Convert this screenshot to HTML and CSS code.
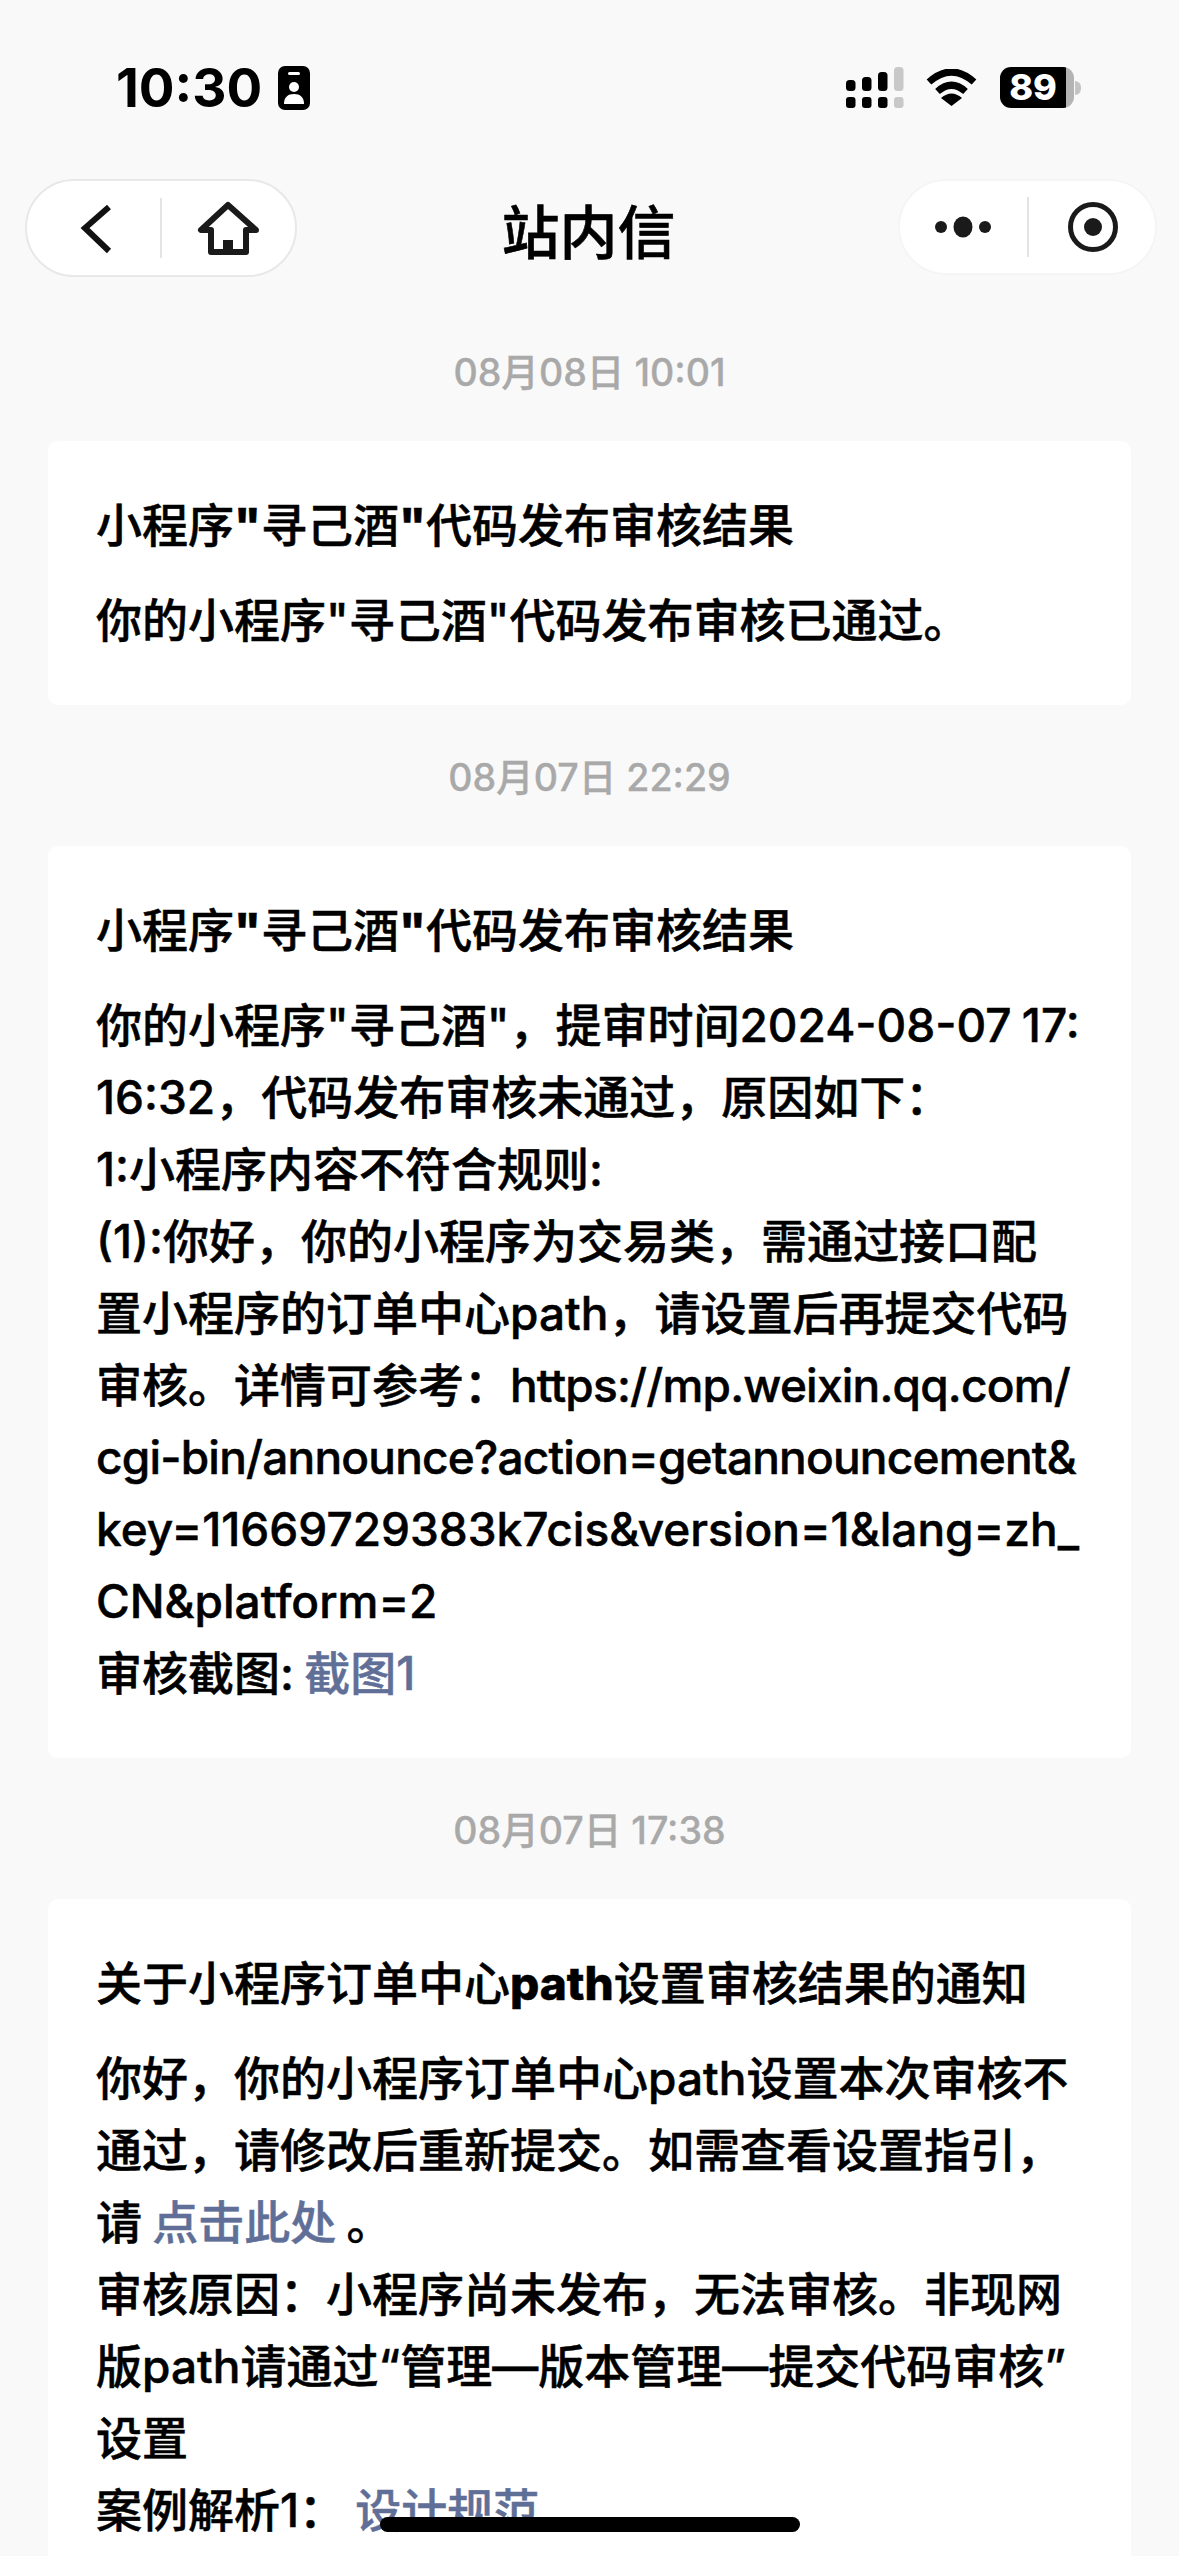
FILE: index.html
```html
<!DOCTYPE html>
<html lang="zh-CN">
<head>
    <meta charset="UTF-8">
    <meta name="viewport" content="width=device-width, initial-scale=1.0">
    <title>站内信</title>
    <link rel="stylesheet" href="styles.css">
</head>
<body>
    <div class="status-bar">
        <div class="status-left">
            <span class="clock">10:30</span>
            <svg class="badge" viewBox="0 0 32 44" width="32" height="44">
                <rect width="32" height="44" rx="7" fill="#000"/>
                <rect x="10" y="6" width="12" height="3" rx="1.5" fill="#fff"/>
                <circle cx="16" cy="21" r="5" fill="#fff"/>
                <path d="M6 38c0-7 4-10 10-10s10 3 10 10z" fill="#fff"/>
            </svg>
        </div>
        <div class="status-right">
            <svg class="signal" viewBox="0 0 58 41" width="58" height="41">
                <rect x="0" y="13" width="9.5" height="11" rx="3.5" fill="#000"/>
                <rect x="16" y="10" width="9.5" height="14" rx="3.5" fill="#000"/>
                <rect x="32" y="5" width="9.5" height="19" rx="3.5" fill="#000"/>
                <rect x="48" y="0" width="9.5" height="24" rx="3.5" fill="#c8c8c8"/>
                <rect x="0" y="30" width="9.5" height="11" rx="3" fill="#000"/>
                <rect x="16" y="30" width="9.5" height="11" rx="3" fill="#000"/>
                <rect x="32" y="30" width="9.5" height="11" rx="3" fill="#000"/>
                <rect x="48" y="30" width="9.5" height="11" rx="3" fill="#c8c8c8"/>
            </svg>
            <svg class="wifi" viewBox="0 0 51 37" width="51" height="37">
                <path d="M3 13Q25.500-7 48 13" fill="none" stroke="#000" stroke-width="7"/>
                <path d="M11.500 22.500Q25.500 10 39.500 22.500" fill="none" stroke="#000" stroke-width="7"/>
                <path d="M15 29Q25.500 20 36 29L25.500 37Z" fill="#000"/>
            </svg>
            <div class="battery">89</div>
            <div class="battery-nub"></div>
        </div>
    </div>

    <div class="nav-bar">
        <div class="capsule capsule-left">
            <svg viewBox="0 0 135 98" width="135" height="98">
                <path d="M84 28L60 49L84 72" fill="none" stroke="#111" stroke-width="6"/>
            </svg>
            <span class="capsule-line"></span>
            <svg viewBox="0 0 135 98" width="135" height="98">
                <path d="M68 26L41 51H51V73H86V51H96Z" fill="none" stroke="#1a1a1a" stroke-width="6" stroke-linejoin="round"/>
                <rect x="63" y="61" width="10" height="12" fill="#1a1a1a"/>
            </svg>
        </div>
        <div class="nav-title">站内信</div>
        <div class="capsule capsule-right">
            <svg viewBox="0 0 129 95" width="129" height="95">
                <circle cx="43" cy="47" r="6" fill="#1a1a1a"/>
                <ellipse cx="65" cy="47" rx="9.500" ry="10.500" fill="#1a1a1a"/>
                <circle cx="87" cy="47" r="6" fill="#1a1a1a"/>
            </svg>
            <span class="capsule-line"></span>
            <svg viewBox="0 0 129 95" width="129" height="95">
                <circle cx="66" cy="47" r="22.500" fill="none" stroke="#1a1a1a" stroke-width="5"/>
                <circle cx="66" cy="47" r="9" fill="#1a1a1a"/>
            </svg>
        </div>
    </div>

    <div class="msg-time">08月08日 10:01</div>
    <div class="msg-card">
        <div class="msg-title">小程序<b>"</b>寻己酒<b>"</b>代码发布审核结果</div>
        <div class="msg-body">你的小程序"寻己酒"代码发布审核已通过。</div>
    </div>

    <div class="msg-time">08月07日 22:29</div>
    <div class="msg-card">
        <div class="msg-title">小程序<b>"</b>寻己酒<b>"</b>代码发布审核结果</div>
        <div class="msg-body">
            你的小程序"寻己酒"，提审时间2024-08-07 17:<br>
            16:32，代码发布审核未通过，原因如下：<br>
            1:小程序内容不符合规则:<br>
            (1):你好，你的小程序为交易类，需通过接口配<br>
            置小程序的订单中心path，请设置后再提交代码<br>
            审核。详情可参考：<span class="tight">https://mp.weixin.qq.com/</span><br>
            <span class="tight">cgi-bin/announce?action=getannouncement&amp;</span><br>
            key=11669729383k7cis&amp;version=1&amp;lang=zh_<br>
            CN&amp;platform=2<br>
            审核截图: <a class="msg-link">截图1</a>
        </div>
    </div>

    <div class="msg-time">08月07日 17:38</div>
    <div class="msg-card">
        <div class="msg-title">关于小程序订单中心<b>path</b>设置审核结果的通知</div>
        <div class="msg-body">
            你好，你的小程序订单中心path设置本次审核不<br>
            通过，请修改后重新提交。如需查看设置指引，<br>
            请 <a class="msg-link">点击此处</a> 。<br>
            审核原因：小程序尚未发布，无法审核。非现网<br>
            版path请通过“管理—版本管理—提交代码审核”<br>
            设置<br>
            案例解析1： <a class="msg-link">设计规范</a>
        </div>
    </div>

    <div class="home-bar"></div>
</body>
</html>
```

FILE: styles.css
```css
html, body {
    height: 2556px;
    overflow: hidden;
}

body {
    margin: 0;
    position: relative;
    background: #f9f9f9;
    color: #000;
    font-family: "Inter", "Noto Sans CJK SC", sans-serif;
}

.status-bar {
    height: 179px;
    box-sizing: border-box;
    padding: 66px 98px 0 116px;
    display: flex;
    justify-content: space-between;
    align-items: flex-start;
}

.status-left {
    display: flex;
    align-items: center;
    gap: 16px;
    height: 44px;
}

.clock {
    font-size: 53px;
    font-weight: 700;
    line-height: 44px;
}

.status-right {
    display: flex;
    align-items: center;
    height: 41px;
    margin-top: 1px;
}

.signal {
    margin-right: 22px;
}

.wifi {
    margin-right: 23px;
}

.battery {
    width: 66px;
    height: 41px;
    padding-right: 8px;
    border-radius: 11px;
    background: linear-gradient(90deg, #000 66px, #b4b4b4 66px);
    color: #fff;
    font-size: 36px;
    font-weight: 800;
    line-height: 41px;
    text-align: center;
}

.battery-nub {
    width: 6px;
    height: 14px;
    margin-left: 1px;
    border-radius: 0 7px 7px 0;
    background: #c4c4c4;
}

.nav-bar {
    height: 121px;
    box-sizing: border-box;
    padding: 0 22px 0 25px;
    display: grid;
    grid-template-columns: 1fr auto 1fr;
    align-items: start;
}

.capsule {
    display: flex;
    align-items: center;
    box-sizing: border-box;
    background: #fff;
    border: 2px solid #e8e8e8;
    border-radius: 49px;
}

.capsule-left {
    width: 272px;
    height: 98px;
    justify-self: start;
}

.capsule-right {
    width: 259px;
    height: 96px;
    justify-self: end;
    border-color: #f5f5f5;
}

.capsule svg {
    flex: none;
    margin: -2px 0 -2px -2px;
}

.capsule-line {
    flex: none;
    width: 2px;
    height: 60px;
    background: #e4e4e4;
}

.nav-title {
    margin: 20px 5px 0 0;
    font-size: 58px;
    font-weight: 500;
    line-height: 68px;
    -webkit-text-stroke: 0.6px #000;
}

.msg-time {
    height: 141px;
    box-sizing: border-box;
    padding-bottom: 3px;
    display: flex;
    align-items: center;
    justify-content: center;
    color: #a9a9a9;
    font-size: 37.6px;
    font-weight: 500;
    -webkit-text-stroke: 0.3px #a9a9a9;
}

.msg-card {
    margin: 0 48px;
    padding: 48px 48px 49px;
    border-radius: 10px;
    background: #fff;
    font-size: 46px;
    line-height: 72px;
    white-space: nowrap;
    -webkit-text-stroke: 0.5px currentColor;
}

.msg-title {
    margin-bottom: 23px;
    font-weight: 500;
}

.msg-title b {
    font-weight: 800;
}

.msg-body {
    font-weight: 500;
    word-spacing: -2px;
}

.tight {
    letter-spacing: -0.8px;
}

.msg-link {
    color: #5f6f97;
}

.home-bar {
    position: absolute;
    left: 380px;
    top: 2517px;
    width: 420px;
    height: 15px;
    border-radius: 8px;
    background: #000;
}
```
